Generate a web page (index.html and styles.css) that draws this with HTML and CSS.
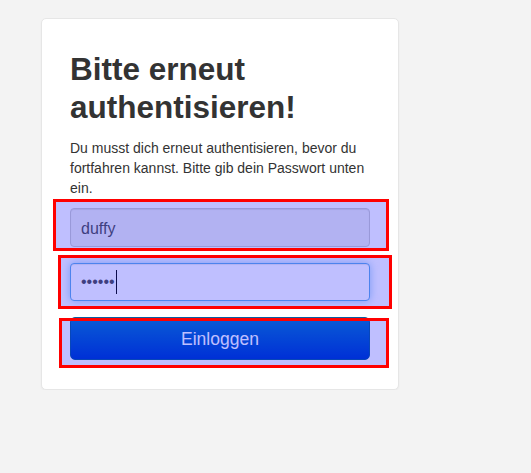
FILE: index.html
```html
<!DOCTYPE html>
<html lang="de">
<head>
<meta charset="utf-8">
<title>Bitte erneut authentisieren!</title>
<link rel="stylesheet" href="styles.css">
</head>
<body>
<div class="page">
  <div class="card">
    <h1 class="title">Bitte erneut authentisieren!</h1>
    <p class="lead">Du musst dich erneut authentisieren, bevor du fortfahren kannst. Bitte gib dein Passwort unten ein.</p>
    <form class="form">
      <div class="field field-disabled">duffy</div>
      <div class="field field-focus"><span class="dots">••••••</span><span class="caret"></span></div>
      <button type="button" class="btn">Einloggen</button>
    </form>
  </div>
</div>
<div class="mark mark-1"></div>
<div class="mark mark-2"></div>
<div class="mark mark-3"></div>
</body>
</html>
```
FILE: styles.css
```css
html, body {
  margin: 0;
  padding: 0;
  background: #f3f3f3;
  font-family: "Liberation Sans", Arial, sans-serif;
  color: #333;
}
.page {
  padding: 18px 0 0 41px;
}
.card {
  width: 300px;
  background: #fff;
  border: 1px solid #e6e6e6;
  border-radius: 5px;
  padding: 31px 28px 29px;
  box-shadow: 0 1px 2px rgba(0,0,0,0.04);
}
.title {
  margin: 0;
  font-size: 31.5px;
  line-height: 38.4px;
  font-weight: bold;
  color: #333;
}
.lead {
  margin: 11px 0 0;
  font-size: 14px;
  line-height: 20px;
  color: #333;
}
.form {
  margin-top: 10px;
  display: flex;
  flex-direction: column;
  gap: 16px;
}
.field {
  box-sizing: border-box;
  height: 38px;
  padding: 0 10px;
  border: 1px solid #ccc;
  border-radius: 4px;
  font-size: 16px;
  color: #555;
  display: flex;
  align-items: center;
  box-shadow: inset 0 1px 1px rgba(0,0,0,0.075);
}
.field-disabled {
  background: #eee;
  height: 39px;
  padding-top: 3px;
}
.field-focus {
  background: #fff;
  border-color: #66afe9;
  box-shadow: inset 0 1px 1px rgba(0,0,0,0.075), 0 0 8px rgba(102,175,233,0.6);
}
.caret {
  display: inline-block;
  width: 1px;
  height: 24px;
  margin-left: 1px;
  background: #111;
}
.btn {
  height: 43px;
  border: 1px solid #0b5fa0;
  border-radius: 5px;
  background: linear-gradient(to bottom, #0d7ac8, #0040c8);
  color: #fff;
  font-family: "Liberation Sans", Arial, sans-serif;
  font-size: 17.5px;
  padding: 2px 0 0;
  cursor: pointer;
}
.mark {
  position: absolute;
  box-sizing: border-box;
  border: 3px solid #f00;
  background: rgba(0,0,255,0.25);
}
.mark-1 { left: 53px; top: 199px; width: 336px; height: 52px; }
.mark-2 { left: 58px; top: 255px; width: 334px; height: 54px; }
.mark-3 { left: 59px; top: 318px; width: 330px; height: 50px; }
```
